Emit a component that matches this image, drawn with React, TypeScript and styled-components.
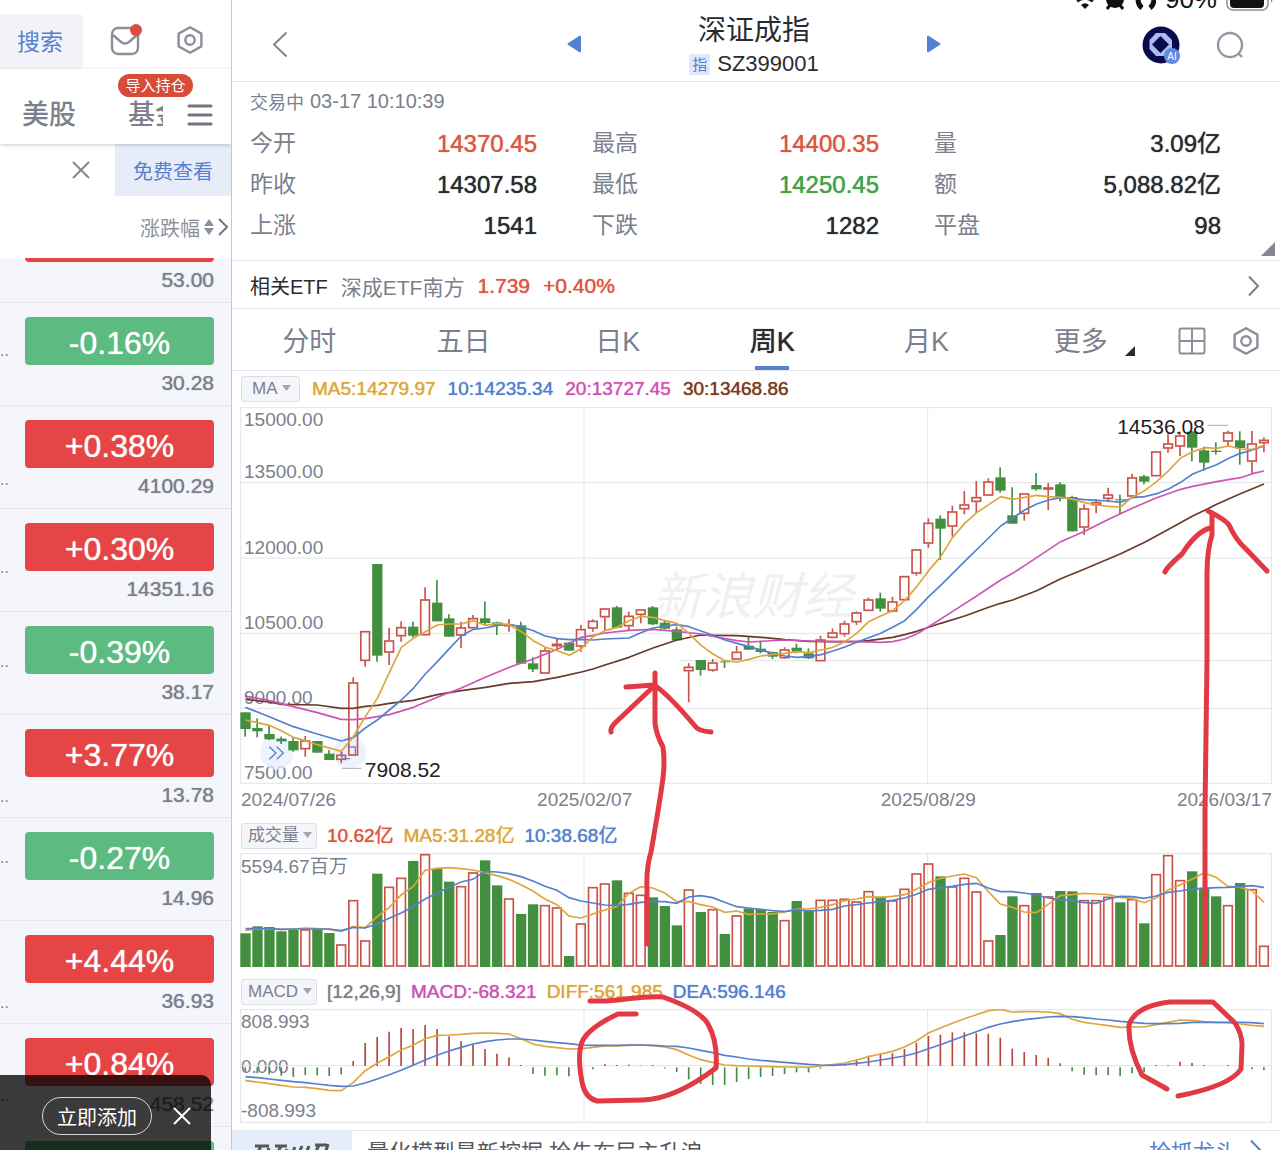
import React, { useState } from 'react';
import styled, { createGlobalStyle } from 'styled-components';

const BLUE = '#5480cf';
const RED = '#dc5640';
const GREEN = '#43a047';
const UP = '#c9544a';
const DOWN = '#42903f';
const GOLD = '#dfa53c';
const PINK = '#cf52b4';
const BROWN = '#6b3a2a';
const TEXT = '#2a2b30';
const MUTED = '#7c7f8d';
const LINE = '#e6e7eb';
const MARK = '#e23a45';

// medium weight for the figures
const MEDIUM = '0 0 1px currentColor';

const GlobalStyle = createGlobalStyle`
  * { box-sizing: border-box; }
  body { margin: 0; background: #fff; color: ${TEXT}; }
  body, button, select { font-family: "Liberation Sans", "Noto Sans CJK SC", sans-serif; }
  button { border: 0; padding: 0; background: none; color: inherit; cursor: pointer; }
  a { color: inherit; text-decoration: none; }
  svg { display: block; }
`;

const Page = styled.div` display: flex; height: 100vh; overflow: hidden; background: #fff; `;

/* ---------- watch list ---------- */

const Sidebar = styled.aside`
  position: relative; flex: 0 0 232px; display: flex; flex-direction: column;
  border-right: 1px solid #c6c8ce; overflow: hidden;
`;
const SideTop = styled.div`
  display: flex; align-items: center; height: 69px; padding-top: 14px;
  > button { padding-bottom: 4px; }
`;
const SearchBtn = styled.button`
  width: 83px; height: 55px; padding-left: 17px; text-align: left; font-size: 23px;
  color: ${BLUE}; background: #f3f4fa; border-radius: 0 4px 4px 0;
`;
const IconBtn = styled.button<{ $left?: number }>`
  display: flex; flex: none; align-items: center; justify-content: center; margin-left: ${p => p.$left ?? 0}px;
`;
const MarketNav = styled.nav`
  position: relative; z-index: 1; display: flex; align-items: center; height: 75px; padding: 16px 18px 0 22px;
  color: ${MUTED}; font-size: 27px; font-weight: 500; background: #fff; box-shadow: 0 1px 4px rgba(0,0,0,.2);
`;
const MarketLink = styled.a<{ $clip?: boolean }>`
  flex: none; white-space: nowrap; overflow: hidden; line-height: 40px;
  ${p => p.$clip && 'width: 35px; margin-left: 52px;'}
`;
const ImportBadge = styled.span`
  position: absolute; left: 118px; top: 5px; width: 75px; height: 23px; border-radius: 12px;
  font-size: 15px; line-height: 23px; text-align: center; font-weight: 400; color: #fff; background: #d84b38;
`;
const PromoRow = styled.div` display: flex; align-items: center; justify-content: flex-end; height: 52px; `;
const FreeBtn = styled.button`
  width: 116px; height: 52px; margin-left: 25px; font-size: 20px; color: ${BLUE}; background: #e6edf9;
`;
const SortRow = styled.div`
  display: flex; flex: none; align-items: center; justify-content: flex-end; gap: 4px; height: 62px; padding-right: 3px;
  font-size: 20px; color: #8d909c;
`;
const ListBox = styled.div` flex: 1; min-height: 0; overflow: hidden; background: #f5f6fb; `;
const List = styled.ul` list-style: none; margin: -58px 0 0; padding: 0; `;
const StockRow = styled.li`
  display: flex; justify-content: space-between; height: 103px; padding: 14px 17px 0 0; border-bottom: 1px solid ${LINE};
`;
const NameTail = styled.span<{ $top: number }>`
  margin-top: ${p => p.$top}px; font-size: 16px; line-height: 16px; color: ${MUTED};
`;
const Quote = styled.div`
  width: 189px; text-align: right; font-size: 21px; line-height: 36px; color: ${MUTED}; text-shadow: ${MEDIUM};
`;
const Change = styled.div<{ $up: boolean }>`
  height: 48px; border-radius: 4px; text-align: center; font-size: 32px; line-height: 52px; color: #fff;
  background: ${p => (p.$up ? '#e64545' : '#5bbb80')};
`;
const Toast = styled.div`
  position: absolute; z-index: 2; left: 0; right: 20px; bottom: 0; height: 75px; padding: 7px 20px 0 42px;
  display: flex; align-items: center; justify-content: space-between;
  background: rgba(0,0,0,.76); border-radius: 0 10px 0 0; color: #fff;
`;
const AddBtn = styled.button`
  width: 110px; height: 38px; border: 1px solid #d8d8d8; border-radius: 19px; font-size: 20px; color: #fff;
`;

/* ---------- quote header ---------- */

const Main = styled.main` position: relative; flex: 1; min-width: 0; overflow: hidden; `;
const StatusBar = styled.div`
  position: absolute; z-index: 1; top: -14px; right: 6px; display: flex; align-items: center; gap: 9px;
  height: 26px; font-size: 26px; line-height: 26px; color: #111;
`;
const Header = styled.header`
  display: grid; grid-template-columns: 1fr 374px 1fr; align-items: center; height: 82px; padding: 0 36px 0 32px;
  border-bottom: 1px solid ${LINE};
`;
const BackBtn = styled(IconBtn)` justify-content: flex-start; padding-left: 8px; `;
const Switcher = styled.div` display: flex; align-items: center; justify-content: space-between; padding-top: 7px; `;
const TitleBox = styled.div` text-align: center; `;
const Title = styled.h1` margin: 0; font-size: 28px; line-height: 40px; font-weight: 400; `;
const Code = styled.div`
  display: flex; align-items: center; justify-content: center; gap: 7px; font-size: 22px; line-height: 26px;
`;
const CodeTag = styled.span`
  width: 21px; height: 21px; font-size: 15px; line-height: 21px; color: ${BLUE}; background: #e0e9fa;
`;
const HeaderTools = styled.div` display: flex; align-items: center; justify-content: flex-end; gap: 36px; padding-top: 8px; `;

const Stats = styled.section` position: relative; height: 179px; border-bottom: 1px solid ${LINE}; `;
const Clock = styled.div`
  display: flex; align-items: center; gap: 6px; height: 41px; padding: 0 0 3px 18px; font-size: 18px; color: ${MUTED};
`;
const Time = styled.span` font-size: 20px; `;
const StatGrid = styled.dl`
  display: grid; grid-template-columns: repeat(3, 1fr); column-gap: 55px; margin: 0; padding: 0 59px 0 18px;
`;
const Stat = styled.div` display: flex; justify-content: space-between; line-height: 41px; `;
const StatName = styled.dt` font-size: 23px; color: ${MUTED}; `;
const StatValue = styled.dd<{ $color?: string }>`
  margin: 0; font-size: 24px; color: ${p => p.$color ?? TEXT}; text-shadow: ${MEDIUM};
`;
const Corner = styled.button` position: absolute; right: 5px; bottom: 4px; `;
const EtfLink = styled.a`
  display: flex; align-items: center; gap: 13px; height: 48px; padding: 2px 20px 0 18px; font-size: 20px;
  border-bottom: 1px solid ${LINE};
`;
const EtfName = styled.span` font-size: 21px; color: ${MUTED}; `;
const EtfValue = styled.span` font-size: 21px; color: ${RED}; text-shadow: ${MEDIUM}; `;
const Spacer = styled.span` flex: 1; `;

const TabBar = styled.div`
  display: flex; align-items: center; height: 62px; padding-right: 20px; border-bottom: 1px solid ${LINE};
`;
const Tabs = styled.div` flex: 1; display: grid; grid-template-columns: repeat(6, 1fr); margin-right: 20px; `;
const Tab = styled.button<{ $active: boolean }>`
  position: relative; height: 61px; font-size: 27px; color: ${p => (p.$active ? TEXT : MUTED)};
  text-shadow: ${p => (p.$active ? MEDIUM : 'none')};
  &::after {
    content: ''; position: absolute; left: 50%; bottom: 0; width: 34px; height: 4px; margin-left: -17px;
    background: ${p => (p.$active ? BLUE : 'transparent')};
  }
`;
const MoreMark = styled.svg` position: absolute; right: 23px; bottom: 14px; `;
const TabTools = styled.div` display: flex; align-items: center; gap: 26px; padding-top: 2px; `;

/* ---------- charts ---------- */

const Charts = styled.section` position: relative; padding: 0 8px 7px; border-bottom: 1px solid ${LINE}; `;
const Legend = styled.div<{ $top: number; $bottom: number; $gap: number }>`
  display: flex; align-items: center; gap: ${p => p.$gap}px; padding: ${p => p.$top}px 0 ${p => p.$bottom}px 1px;
  font-size: 19px; line-height: 26px; white-space: nowrap;
`;
const LegendText = styled.span<{ $color: string }>` color: ${p => p.$color}; text-shadow: ${MEDIUM}; `;
const Picker = styled.label` position: relative; display: flex; `;
const PickerSelect = styled.select<{ $pad: number }>`
  appearance: none; height: 26px; padding: 0 ${p => p.$pad + 11}px 0 ${p => p.$pad}px;
  border: 1px solid #dcdee6; border-radius: 3px;
  font-size: 17px; line-height: 24px; color: ${MUTED}; background: #f5f6fa;
`;
const PickerCaret = styled.svg<{ $pad: number }>`
  position: absolute; right: ${p => p.$pad - 1}px; top: 9px; pointer-events: none;
`;
const Plot = styled.div<{ $height: number }>` position: relative; height: ${p => p.$height}px; `;
const PlotSvg = styled.svg` position: relative; width: 100%; height: 100%; `;
const AxisLabel = styled.span<{ $top: number; $left?: number }>`
  position: absolute; left: ${p => p.$left ?? 1}px; top: ${p => p.$top}px; font-size: 19px; line-height: 22px; color: ${MUTED};
`;
const Watermark = styled.span`
  position: absolute; left: 40%; top: 157px; font-size: 50px; line-height: 66px; font-style: italic; color: #f0f0f1;
`;
const Extreme = styled.span<{ $top: number; $left: string }>`
  position: absolute; left: ${p => p.$left}; top: ${p => p.$top}px; font-size: 21px; line-height: 24px; color: #1f2024;
`;
const Dates = styled.div`
  display: grid; grid-template-columns: 1fr 2fr 2fr 1fr; padding-left: 1px; font-size: 19px; line-height: 32px;
  text-align: center; color: ${MUTED}; white-space: nowrap;
  > :first-child { text-align: left; }
  > :last-child { justify-self: end; }
`;
const Marks = styled.svg` position: absolute; left: 0; top: 0; width: 100%; height: 100%; pointer-events: none; `;

const Banner = styled.a` display: flex; align-items: center; height: 38px; padding-right: 18px; font-size: 22px; color: #55575f; `;
const BannerLogo = styled.span`
  display: flex; align-items: center; justify-content: center; width: 120px; height: 38px; margin-right: 15px; background: #e5edfa;
`;
const BannerAction = styled.span` margin-right: 12px; color: ${BLUE}; `;

/* ---------- data ---------- */

// The first and last rows are scrolled half out of view.
const stocks: { up: boolean; change?: string; price?: string; tail?: number }[] = [
  { up: true, price: '53.00' },
  { up: false, change: '-0.16%', price: '30.28', tail: 26 },
  { up: true, change: '+0.38%', price: '4100.29', tail: 52 },
  { up: true, change: '+0.30%', price: '14351.16', tail: 37 },
  { up: false, change: '-0.39%', price: '38.17', tail: 28 },
  { up: true, change: '+3.77%', price: '13.78', tail: 60 },
  { up: false, change: '-0.27%', price: '14.96', tail: 18 },
  { up: true, change: '+4.44%', price: '36.93', tail: 60 },
  { up: true, change: '+0.84%', price: '458.52', tail: 50 },
  { up: false },
];

const stats: [string, string, string?][] = [
  ['今开', '14370.45', RED], ['最高', '14400.35', RED], ['量', '3.09亿'],
  ['昨收', '14307.58'], ['最低', '14250.45', GREEN], ['额', '5,088.82亿'],
  ['上涨', '1541'], ['下跌', '1282'], ['平盘', '98'],
];

const tabs = ['分时', '五日', '日K', '周K', '月K', '更多'];

// Plots are drawn in a grid three times finer than the layout.
const W = 3096;
const cx = (i: number) => 16 + i * 35.95;

type Candle = [number, number, number, number, number]; // high, top, bottom, low, 1 = rising
const block = (dy: number, rows: Candle[]) =>
  rows.map(([h, t, b, l, up]) => ({ h: h + dy, t: t + dy, b: b + dy, l: l + dy, up: up === 1 }));

const candles = [
  ...block(-111, [
    [1027, 1027, 1077, 1100, 0], [1045, 1074, 1084, 1102, 0], [1067, 1092, 1108, 1110, 0], [1100, 1106, 1114, 1122, 0],
    [1103, 1113, 1141, 1145, 0], [1098, 1111, 1138, 1160, 1], [1113, 1113, 1148, 1148, 0], [1140, 1151, 1170, 1170, 0],
    [1145, 1154, 1170, 1180, 1], [922, 937, 1157, 1157, 1], [783, 783, 873, 890, 1], [582, 582, 857, 875, 0],
    [773, 811, 848, 885, 1], [754, 771, 799, 815, 1], [755, 770, 797, 802, 0], [652, 688, 796, 796, 1],
    [630, 698, 754, 754, 0], [733, 745, 800, 800, 0], [755, 772, 797, 834, 1], [735, 744, 775, 775, 1],
    [694, 745, 759, 768, 0], [755, 757, 767, 795, 0], [747, 764, 767, 785, 1], [755, 766, 881, 881, 0],
    [862, 880, 898, 906, 0], [835, 841, 911, 911, 1], [806, 821, 829, 838, 1], [816, 818, 842, 842, 0],
    [765, 777, 830, 845, 1],
  ]),
  ...block(459, [
    [178, 182, 206, 215, 1], [145, 145, 172, 210, 1], [138, 142, 203, 205, 0], [155, 167, 199, 210, 1],
    [148, 148, 165, 190, 1], [138, 142, 193, 195, 0], [182, 188, 206, 208, 0], [200, 208, 241, 241, 0],
    [310, 320, 334, 427, 1], [300, 300, 330, 347, 0], [297, 307, 332, 335, 1], [303, 304, 307, 324, 0],
    [258, 275, 299, 299, 1], [230, 257, 269, 270, 0], [246, 266, 276, 280, 0], [275, 276, 290, 297, 0],
    [262, 268, 295, 297, 1], [251, 263, 275, 280, 0], [265, 280, 295, 297, 0], [227, 238, 304, 304, 1],
    [205, 217, 234, 234, 1], [182, 190, 223, 230, 1], [154, 157, 187, 195, 1], [113, 118, 153, 153, 1],
    [98, 115, 146, 155, 0], [110, 124, 155, 157, 1], [48, 48, 121, 121, 1],
  ]),
  ...block(-21, [
    [448, 448, 521, 527, 1], [355, 368, 431, 443, 1], [346, 356, 386, 480, 0], [317, 334, 380, 410, 1],
    [273, 313, 328, 343, 1], [243, 291, 306, 340, 1], [235, 244, 287, 287, 1], [202, 232, 272, 278, 0],
    [262, 346, 371, 371, 0], [280, 280, 342, 362, 1], [219, 255, 268, 272, 0], [249, 262, 269, 330, 1],
    [247, 253, 293, 304, 0], [287, 291, 394, 394, 0], [313, 325, 383, 405, 1], [297, 306, 316, 340, 1],
    [263, 283, 297, 307, 1], [284, 298, 301, 342, 0], [222, 232, 290, 290, 1], [225, 229, 245, 253, 0],
    [153, 154, 229, 229, 1], [100, 130, 146, 158, 1], [95, 106, 140, 168, 1], [93, 95, 143, 184, 0],
    [140, 151, 188, 212, 0], [127, 152, 156, 164, 0], [92, 97, 125, 138, 1], [94, 121, 144, 194, 0],
    [93, 130, 185, 220, 1], [112, 119, 130, 157, 1],
  ]),
];

const shift = (dx: number, dy: number, pts: string) =>
  pts.split(' ').map(p => { const [x, y] = p.split(',').map(Number); return `${x + dx},${y + dy}`; }).join(' ');
const average = (a: string, b: string, c: string) =>
  [shift(-24, -111, a), shift(1020, 459, b), shift(1980, -21, c)].join(' ');

const averages = [
  {
    color: BROWN,
    points: average(
      '40,988 112,996 148,1003 256,1005 328,1015 364,1015 400,1009 436,1006 472,1000 544,991 616,974 688,962 760,952 832,940 904,935 976,922 1048,906',
      '39,327 75,315 147,292 219,264 291,240 363,225 399,226 471,227 543,232 615,239 687,244 759,245 830,245 866,242 938,232 974,224 1010,214',
      '86,682 122,670 194,648 266,622 302,610 338,600 410,572 482,536 554,507 662,461 734,427 806,388 878,348 914,331 950,313 1021,281 1092,252'),
  },
  {
    color: PINK,
    points: average(
      '40,978 112,992 184,1010 256,1028 328,1048 364,1049 400,1046 472,1034 544,1012 616,982 688,954 760,922 832,892 904,867 976,838 1048,802',
      '39,226 75,219 147,211 219,208 291,214 363,222 435,236 471,242 507,246 543,244 615,240 687,243 759,245 830,245 902,247 938,245 974,237 1010,222',
      '86,680 158,634 230,588 302,540 338,520 410,473 482,425 554,394 626,358 698,324 770,293 842,268 878,259 950,245 1021,233 1057,221 1092,213'),
  },
  {
    color: BLUE,
    points: average(
      '40,1012 112,1040 184,1070 256,1092 328,1113 364,1103 400,1074 436,1050 472,1020 508,990 544,955 580,912 616,875 652,836 688,798 724,778 760,774 796,766 832,764 868,770 904,782 940,798 976,806 1012,809 1048,808',
      '39,240 75,237 147,234 183,218 219,204 255,198 291,194 327,200 363,213 399,226 435,240 471,250 507,260 543,270 579,280 615,288 651,292 687,290 723,284 759,273 795,261 830,247 866,233 902,220 938,202 974,182 1010,148',
      '86,590 122,556 194,484 266,414 302,378 338,354 374,330 410,312 446,300 482,293 554,299 626,303 662,307 698,293 734,290 770,281 806,267 842,247 878,222 914,208 950,194 986,175 1021,160 1057,150 1092,138'),
  },
  {
    color: GOLD,
    points: average(
      '40,1050 112,1066 148,1082 184,1102 220,1112 256,1124 328,1144 364,1100 400,1040 436,985 472,908 508,832 544,805 580,785 616,765 652,762 688,762 724,752 760,766 796,760 832,764 868,785 904,812 940,832 976,842 1012,856 1048,836',
      '39,230 75,212 111,202 147,182 183,169 219,172 255,182 291,190 327,220 363,256 399,282 435,302 471,306 507,298 543,288 579,283 615,280 651,275 687,278 723,270 759,262 795,245 830,220 866,185 902,168 938,152 974,122 1010,80',
      '86,512 122,470 158,412 194,370 230,338 266,314 302,290 338,298 374,292 410,286 446,290 482,292 518,298 554,308 590,315 626,319 662,321 698,290 734,272 770,245 806,212 842,174 878,155 914,143 950,145 986,138 1021,147 1057,148 1092,136'),
  },
];

const volumeTops = [
  370, 349, 351, 364, 360, 358, 355, 369, 403, 270, 391, 191, 230, 203, 153, 132, 177, 215, 228, 187, 151, 226, 265, 312,
  283, 285, 292, 438, 340, 231, 220, 211, 248, 254, 262, 288, 346, 238, 306, 297, 372, 316, 295, 297, 306, 330, 273, 300,
  269, 269, 266, 274, 243, 260, 271, 236, 190, 160, 199, 229, 203, 244, 391, 375, 259, 285, 249, 259, 243, 244, 270, 270,
  260, 277, 267, 340, 192, 135, 210, 184, 233, 259, 285, 219, 237, 407,
];
const volumeUp = [5, 8, 9, 10, 12, 13, 15, 18, 19, 22, 25, 26, 28, 29, 30, 32, 33, 37, 39, 41, 45, 48, 49, 50, 51, 52, 54,
  55, 56, 57, 59, 60, 61, 62, 65, 67, 70, 71, 72, 74, 76, 77, 78, 82, 84, 85];
const volumeMa5 = [
  361, 357, 357, 358, 357, 354, 356, 358, 364, 350, 353, 320, 293, 255, 230, 181, 175, 173, 176, 180, 188, 197, 208, 224,
  243, 267, 284, 318, 324, 312, 300, 290, 250, 230, 234, 249, 275, 275, 284, 291, 307, 303, 313, 312, 312, 306, 297, 297,
  292, 284, 272, 267, 260, 262, 259, 254, 238, 218, 205, 198, 192, 203, 245, 282, 292, 306, 308, 283, 257, 254, 250, 252,
  254, 262, 266, 278, 264, 240, 225, 208, 189, 202, 229, 232, 242, 277,
];
const volumeMa10 = [
  356, 356, 356, 358, 357, 357, 357, 357, 362, 352, 354, 341, 325, 309, 290, 267, 250, 232, 216, 208, 184, 186, 191, 200,
  213, 229, 241, 263, 273, 279, 285, 286, 283, 277, 275, 275, 280, 261, 257, 263, 277, 290, 294, 298, 302, 305, 299, 303,
  301, 298, 288, 284, 279, 275, 271, 264, 253, 238, 233, 229, 223, 220, 234, 245, 245, 249, 255, 264, 269, 272, 278, 280,
  267, 259, 260, 265, 258, 247, 243, 237, 235, 233, 232, 230, 227, 232,
];
const macdEnds = [
  785, 790, 793, 797, 801, 795, 796, 798, 793, 753, 699, 681, 665, 654, 657, 645, 657, 679, 694, 703, 717, 731, 742, 765,
  792, 797, 796, 799, 790, 778, 763, 765, 764, 767, 765, 775, 786, 808, 822, 825, 825, 816, 807, 801, 798, 792, 787, 787,
  776, 767, 762, 749, 737, 732, 730, 717, 699, 678, 674, 667, 667, 670, 671, 683, 716, 726, 735, 744, 760, 784, 794, 796,
  796, 799, 790, 787, 765, 766, 755, 759, 765, 767, 765, 767, 778, 780,
];
const diff = [
  812, 816, 821, 826, 831, 832, 836, 841, 842, 818, 782, 760, 740, 720, 706, 686, 676, 675, 673, 670, 669, 670, 672, 686,
  702, 709, 713, 717, 716, 712, 708, 708, 706, 705, 707, 711, 719, 735, 749, 757, 765, 767, 768, 769, 770, 771, 771, 772,
  768, 764, 759, 750, 740, 732, 724, 711, 693, 669, 654, 640, 626, 614, 602, 598, 606, 605, 605, 606, 611, 628, 637, 642,
  647, 652, 651, 651, 644, 637, 630, 631, 635, 637, 638, 642, 646, 649,
];
const dea = [
  800, 803, 807, 811, 815, 818, 822, 826, 829, 828, 819, 807, 794, 781, 766, 750, 736, 723, 712, 702, 695, 690, 687, 687,
  690, 694, 698, 701, 705, 706, 706, 706, 705, 705, 706, 708, 709, 714, 721, 728, 736, 741, 747, 751, 754, 757, 760, 763,
  765, 766, 764, 760, 756, 750, 744, 738, 729, 716, 704, 691, 678, 665, 652, 642, 635, 629, 625, 621, 619, 620, 623, 627,
  630, 634, 637, 640, 641, 641, 640, 637, 637, 637, 637, 637, 638, 641,
];
const trace = (values: number[], dy: number) => values.map((v, i) => `${cx(i)},${v + dy}`).join(' ');

/* ---------- icons ---------- */

const Hexagon = ({ size = 28 }: { size?: number }) => (
  <svg width={size} height={size} viewBox="0 0 28 28" fill="none" stroke="#8b8e9b" strokeWidth="2.4" strokeLinejoin="round">
    <path d="M14 1.2 25.4 7.6V20.4L14 26.8 2.6 20.4V7.6Z" />
    <circle cx="14" cy="14" r="4.7" />
  </svg>
);
const Cross = ({ color }: { color: string }) => (
  <svg width="18" height="18" viewBox="0 0 18 18" fill="none" stroke={color} strokeWidth="2"><path d="M1 1 17 17M17 1 1 17" /></svg>
);
const Chevron = ({ color = '#7c7f8d' }: { color?: string }) => (
  <svg width="13" height="22" viewBox="0 0 13 22" fill="none" stroke={color} strokeWidth="2"><path d="M2 1.5 11 11 2 20.5" /></svg>
);

const Frame = ({ h, rows, children }: { h: number; rows: number[]; children?: React.ReactNode }) => (
  <g stroke="#e2e4e8" strokeWidth="3" fill="none">
    <rect x="2" y="2" width={W - 4} height={h - 4} />
    {rows.map(y => <path key={y} d={`M2 ${y}H${W - 2}`} />)}
    <path d={`M1032 2V${h - 2}M2063 2V${h - 2}`} />
    {children}
  </g>
);

const Pick: React.FC<{ name: string; options: string[]; pad?: number }> = ({ name, options, pad = 6 }) => (
  <Picker>
    <PickerSelect aria-label={name} $pad={pad}>
      {options.map(o => <option key={o}>{o}</option>)}
    </PickerSelect>
    <PickerCaret $pad={pad} width="9" height="6" viewBox="0 0 9 6"><path d="M0 0H9L4.5 6Z" fill="#a3a5ae" /></PickerCaret>
  </Picker>
);

const WatchList = () => (
  <Sidebar>
    <SideTop>
      <SearchBtn>搜索</SearchBtn>
      <IconBtn $left={26} aria-label="消息">
        <svg width="34" height="36" viewBox="0 0 34 36" fill="none">
          <rect x="3" y="6" width="26" height="26" rx="6" stroke="#8b8e9b" strokeWidth="2.4" />
          <path d="M4 13 12 20Q16 23 20 20L28 13" stroke="#8b8e9b" strokeWidth="2.4" />
          <circle cx="27" cy="8" r="6" fill="#d9503e" />
        </svg>
      </IconBtn>
      <IconBtn $left={33} aria-label="设置"><Hexagon /></IconBtn>
    </SideTop>
    <MarketNav>
      <MarketLink href="#us">美股</MarketLink>
      <MarketLink href="#fund" $clip>基金</MarketLink>
      <Spacer />
      <IconBtn aria-label="菜单">
        <svg width="26" height="22" viewBox="0 0 26 22" stroke="#73757f" strokeWidth="3" strokeLinecap="round"><path d="M2 2H24M2 11H24M2 20H24" /></svg>
      </IconBtn>
      <ImportBadge>导入持仓</ImportBadge>
    </MarketNav>
    <PromoRow>
      <IconBtn aria-label="关闭"><Cross color="#85878f" /></IconBtn>
      <FreeBtn>免费查看</FreeBtn>
    </PromoRow>
    <SortRow>
      涨跌幅
      <svg width="10" height="16" viewBox="0 0 10 16" fill="#8d909c"><path d="M5 0 10 7H0ZM5 16 0 9H10Z" /></svg>
      <svg width="10" height="18" viewBox="0 0 10 18" fill="none" stroke="#73757f" strokeWidth="2"><path d="M1 1 9 9 1 17" /></svg>
    </SortRow>
    <ListBox>
      <List>
        {stocks.map((s, i) => (
          <StockRow key={i}>
            <NameTail $top={s.tail ?? 0}>{s.tail ? '..' : ''}</NameTail>
            <Quote>
              <Change $up={s.up}>{s.change}</Change>
              {s.price}
            </Quote>
          </StockRow>
        ))}
      </List>
    </ListBox>
    <Toast>
      <AddBtn>立即添加</AddBtn>
      <IconBtn aria-label="关闭"><Cross color="#fff" /></IconBtn>
    </Toast>
  </Sidebar>
);

const axis: [string, number][] = [
  ['15000.00', 2], ['13500.00', 54], ['12000.00', 130], ['10500.00', 205], ['9000.00', 280], ['7500.00', 355],
];

const PriceChart = () => (
  <Plot $height={377}>
    {axis.map(([t, y]) => <AxisLabel key={t} $left={4} $top={y}>{t}</AxisLabel>)}
    <Watermark>新浪财经</Watermark>
    <PlotSvg viewBox={`0 0 ${W} 1131`} preserveAspectRatio="none">
      <Frame h={1131} rows={[227, 453, 679, 904]}><path d={`M1320 761H${W - 2}`} /></Frame>
      <g fill="#e6eefb" fillOpacity=".7"><circle cx="110" cy="1038" r="50" /><circle cx="329" cy="1036" r="50" /></g>
      <path d="M88 1019 108 1038 88 1057M110 1019 130 1038 110 1057" fill="none" stroke={BLUE} strokeWidth="4" />
      {candles.map((c, i) => {
        const x = cx(i);
        return c.up ? (
          <g key={i} fill="none" stroke={UP} strokeWidth="5">
            <path d={`M${x} ${c.h}V${c.t}M${x} ${c.b}V${c.l}`} />
            <rect x={x - 13} y={c.t + 2} width="26" height={Math.max(c.b - c.t - 4, 1)} />
          </g>
        ) : (
          <g key={i} fill={DOWN}>
            <rect x={x - 3} y={c.h} width="5" height={c.l - c.h} />
            <rect x={x - 15} y={c.t} width="31" height={c.b - c.t} />
          </g>
        );
      })}
      <path d="M322 1020H346V1044M330 1055H306V1034" fill="none" stroke="#8a78c8" strokeWidth="4" />
      {averages.map(a => <polyline key={a.color} points={a.points} fill="none" stroke={a.color} strokeWidth="5" strokeLinejoin="round" />)}
      <path d="M306 1084H364M2902 55H2964" stroke="#a9adbd" strokeWidth="3" />
    </PlotSvg>
    <Extreme $top={351} $left="12.1%">7908.52</Extreme>
    <Extreme $top={8} $left="85%">14536.08</Extreme>
  </Plot>
);

const VolumeChart = () => (
  <Plot $height={114}>
    <AxisLabel $top={3}>5594.67百万</AxisLabel>
    <PlotSvg viewBox={`0 0 ${W} 342`} preserveAspectRatio="none">
      <Frame h={342} rows={[]} />
      {volumeTops.map((t, i) => (volumeUp.includes(i)
        ? <rect key={i} x={cx(i) - 13} y={t - 127} width="26" height={466 - t} fill="none" stroke={UP} strokeWidth="5" />
        : <rect key={i} x={cx(i) - 15} y={t - 129} width="31" height={471 - t} fill={DOWN} />))}
      <polyline points={trace(volumeMa5, -129)} fill="none" stroke={GOLD} strokeWidth="5" />
      <polyline points={trace(volumeMa10, -129)} fill="none" stroke={BLUE} strokeWidth="5" />
    </PlotSvg>
  </Plot>
);

const MacdChart = () => (
  <Plot $height={114}>
    <AxisLabel $top={2}>808.993</AxisLabel>
    <AxisLabel $top={47}>0.000</AxisLabel>
    <AxisLabel $top={91}>-808.993</AxisLabel>
    <PlotSvg viewBox={`0 0 ${W} 342`} preserveAspectRatio="none">
      <Frame h={342} rows={[170]} />
      {macdEnds.map((v, i) => (v > 770
        ? <path key={i} d={`M${cx(i)} 175V${v - 597}`} stroke={DOWN} strokeWidth="5" />
        : <path key={i} d={`M${cx(i)} 171V${v - 597}`} stroke="#b5473f" strokeWidth="5" />))}
      <polyline points={trace(diff, -597)} fill="none" stroke={GOLD} strokeWidth="5" />
      <polyline points={trace(dea, -597)} fill="none" stroke={BLUE} strokeWidth="5" />
    </PlotSvg>
  </Plot>
);

export default function App() {
  const [tab, setTab] = useState('周K');

  return (
    <Page>
      <GlobalStyle />
      <WatchList />
      <Main>
        <StatusBar>
          <svg width="80" height="26" viewBox="0 0 80 26" fill="none" stroke="#111">
            <path d="M1 15Q9 9 17 15" strokeWidth="3.5" />
            <path d="M5 19Q9 15.5 13 19L9 23Z" fill="#111" stroke="none" />
            <circle cx="39" cy="13" r="9" fill="#111" stroke="none" />
            <path d="M34 19 31 23M44 19 47 23" strokeWidth="3" />
            <path d="M62 14C62 1 78 1 78 14" strokeWidth="2" />
            <path d="M62 13Q62 19 66 22M78 13Q78 19 74 22" strokeWidth="5" />
          </svg>
          90%
          <svg width="48" height="26" viewBox="0 0 48 26">
            <rect x="1" y="4" width="41" height="20" rx="6" fill="none" stroke="#8e8e93" strokeWidth="1.5" />
            <rect x="4" y="6" width="34" height="16" rx="4" fill="#111" />
            <path d="M45 10Q48 14 45 17Z" fill="#8e8e93" />
          </svg>
        </StatusBar>
        <Header>
          <BackBtn aria-label="返回">
            <svg width="16" height="34" viewBox="0 0 16 34" fill="none" stroke="#85878f" strokeWidth="2"><path d="M14.5 8.500 2 20.5 14.5 32.5" /></svg>
          </BackBtn>
          <Switcher>
            <IconBtn aria-label="上一个">
              <svg width="14" height="18" viewBox="0 0 14 18" fill={BLUE} stroke={BLUE} strokeWidth="2" strokeLinejoin="round"><path d="M13 1.500V16.500L1.500 9Z" /></svg>
            </IconBtn>
            <TitleBox>
              <Title>深证成指</Title>
              <Code><CodeTag>指</CodeTag>SZ399001</Code>
            </TitleBox>
            <IconBtn aria-label="下一个">
              <svg width="14" height="18" viewBox="0 0 14 18" fill={BLUE} stroke={BLUE} strokeWidth="2" strokeLinejoin="round"><path d="M1 1.500V16.500L12.500 9Z" /></svg>
            </IconBtn>
          </Switcher>
          <HeaderTools>
            <IconBtn aria-label="AI">
              <svg width="38" height="38" viewBox="0 0 38 38">
                <circle cx="19" cy="19" r="18.5" fill="#0b0a4a" />
                <path d="M14 7H23L30 14V23L23 30H14L7.500 23V14Z" fill="#a9bdf2" />
                <path d="M18.500 10 27 18.500 18.500 27 10 18.500Z" fill="#0b0a4a" />
                <circle cx="30" cy="30" r="8" fill="#5e8be0" />
                <text x="30" y="34" textAnchor="middle" fontSize="10" fill="#fff">AI</text>
              </svg>
            </IconBtn>
            <IconBtn aria-label="搜索">
              <svg width="28" height="28" viewBox="0 0 28 28" fill="none" stroke="#9597a3" strokeWidth="2.4"><circle cx="14" cy="14" r="12" /><path d="M22 22 26 26" /></svg>
            </IconBtn>
          </HeaderTools>
        </Header>

        <Stats>
          <Clock>交易中<Time>03-17 10:10:39</Time></Clock>
          <StatGrid>
            {stats.map(([name, value, color]) => (
              <Stat key={name}>
                <StatName>{name}</StatName>
                <StatValue $color={color}>{value}</StatValue>
              </Stat>
            ))}
          </StatGrid>
          <Corner aria-label="展开"><svg width="14" height="14" viewBox="0 0 14 14"><path d="M14 0V14H0Z" fill="#858894" /></svg></Corner>
        </Stats>

        <EtfLink href="#etf">
          <span>相关ETF</span>
          <EtfName>深成ETF南方</EtfName>
          <EtfValue>1.739</EtfValue>
          <EtfValue>+0.40%</EtfValue>
          <Spacer />
          <Chevron />
        </EtfLink>

        <TabBar>
          <Tabs role="tablist">
            {tabs.map(t => (
              <Tab key={t} role="tab" aria-selected={t === tab} $active={t === tab} onClick={() => setTab(t)}>
                {t}
                {t === '更多' && <MoreMark width="10" height="10" viewBox="0 0 10 10"><path d="M10 0V10H0Z" fill="#2a2b30" /></MoreMark>}
              </Tab>
            ))}
          </Tabs>
          <TabTools>
            <IconBtn aria-label="布局">
              <svg width="28" height="28" viewBox="0 0 28 28" fill="none" stroke="#8b8e9b" strokeWidth="2"><rect x="1.5" y="1.5" width="25" height="25" rx="2" /><path d="M14 2V26M2 14H26" /></svg>
            </IconBtn>
            <IconBtn aria-label="图表设置"><Hexagon /></IconBtn>
          </TabTools>
        </TabBar>

        <Charts>
          <Legend $top={5} $bottom={5} $gap={12}>
            <Pick name="主图指标" options={['MA']} pad={10} />
            <LegendText $color={GOLD}>MA5:14279.97</LegendText>
            <LegendText $color={BLUE}>10:14235.34</LegendText>
            <LegendText $color={PINK}>20:13727.45</LegendText>
            <LegendText $color="#7a3a1e">30:13468.86</LegendText>
          </Legend>
          <PriceChart />
          <Dates>
            <span>2024/07/26</span>
            <span>2025/02/07</span>
            <span>2025/08/29</span>
            <span>2026/03/17</span>
          </Dates>
          <Legend $top={7} $bottom={4} $gap={10}>
            <Pick name="副图指标一" options={['成交量']} />
            <LegendText $color={RED}>10.62亿</LegendText>
            <LegendText $color={GOLD}>MA5:31.28亿</LegendText>
            <LegendText $color={BLUE}>10:38.68亿</LegendText>
          </Legend>
          <VolumeChart />
          <Legend $top={12} $bottom={4} $gap={10}>
            <Pick name="副图指标二" options={['MACD']} />
            <LegendText $color={MUTED}>[12,26,9]</LegendText>
            <LegendText $color={PINK}>MACD:-68.321</LegendText>
            <LegendText $color={GOLD}>DIFF:561.985</LegendText>
            <LegendText $color={BLUE}>DEA:596.146</LegendText>
          </Legend>
          <MacdChart />
          <Marks viewBox="232 371 1048 759" preserveAspectRatio="none" fill="none" stroke={MARK} strokeWidth="5" strokeLinecap="round" strokeLinejoin="round">
            <path d="M655 673V723Q656 734 663 747Q665 762 663 778C660 800 657 818 651 852Q646 868 647 890V944" />
            <path d="M611 732Q610 728 615 723L652 688M626 687 654 685Q668 694 695 726Q698 731 711 732" />
            <path d="M1212 513V535Q1207 550 1207 575V660L1205 810V950L1203 964" />
            <path d="M1165 572Q1167 567 1182 554 1196 532 1210 528M1208 511Q1226 520 1229 525 1236 540 1245 548L1267 571" />
            <path d="M590 1001H607C630 999 645 996 663 997Q700 1010 708 1024Q718 1042 716 1068Q675 1099 643 1100L597 1101Q585 1098 582 1082Q577 1055 582 1042 588 1028 618 1014H636" />
            <path d="M1167 1089 1142 1075Q1128 1048 1129 1025 1135 1006 1170 1002H1213L1235 1023Q1242 1034 1242 1045L1241 1069Q1230 1086 1178 1096" />
          </Marks>
        </Charts>

        <Banner href="#quant">
          <BannerLogo>
            <svg width="82" height="16" viewBox="0 0 82 16" fill="none" stroke="#55575f" strokeWidth="3">
              <path d="M4 4H18M10 4 4 16M18 6 14 16M24 4H36M30 4 24 16M36 7 32 16M44 5 39 16M51 4 46 16M58 4 53 16M64 3H76M68 3 62 16M77 2 73 16" />
            </svg>
          </BannerLogo>
          量化模型最新挖掘 抢先布局主升浪
          <Spacer />
          <BannerAction>抢抓龙头</BannerAction>
          <Chevron color={BLUE} />
        </Banner>
      </Main>
    </Page>
  );
}
